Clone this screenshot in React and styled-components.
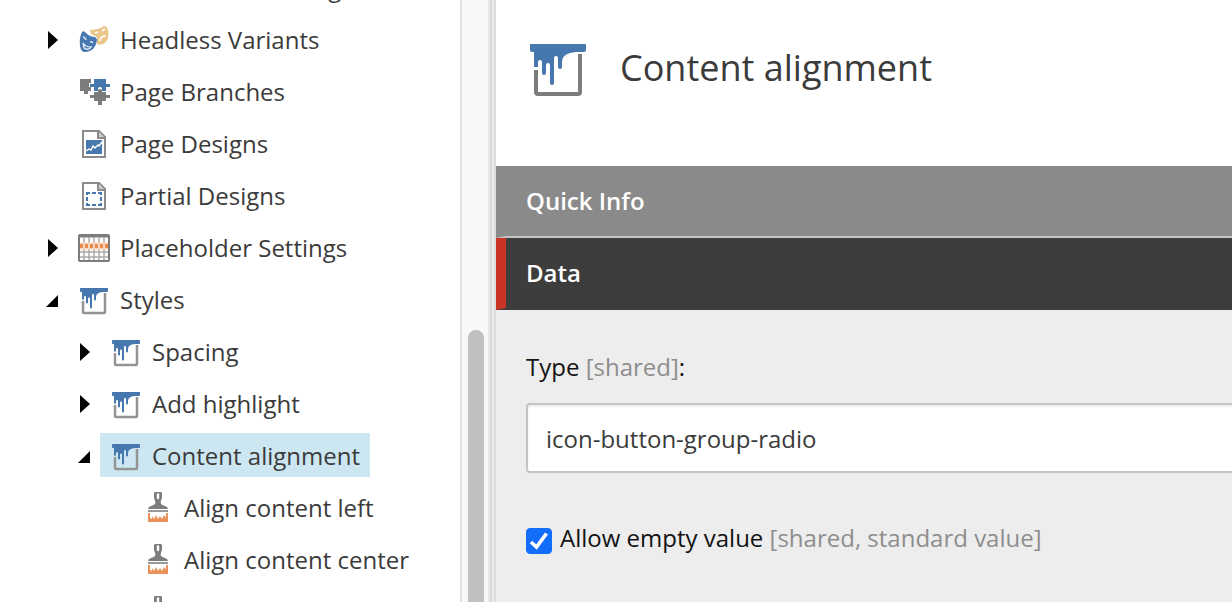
import React, { useState } from "react";
import styled, { createGlobalStyle } from "styled-components";

const GlobalStyle = createGlobalStyle`
  *, *::before, *::after { box-sizing: border-box; }
  body {
    margin: 0;
    background: #fff;
    color: #3b3b3b;
    font-family: "Open Sans", "Noto Sans", sans-serif;
    font-size: 24px;
    line-height: 44px;
  }
  button, input { font: inherit; color: inherit; }
`;

const Layout = styled.div`
  display: grid;
  grid-template-columns: 460px 28px 8px minmax(0, 1fr);
  height: 100vh;
  overflow: hidden;
`;

const TreePane = styled.nav`
  min-width: 0;
  overflow: hidden;
  background: #fff;
`;

const TreeList = styled.ul`
  list-style: none;
  margin: -38px 0 0;
  padding: 0;
`;

const TreeRow = styled.li`
  display: flex;
  align-items: center;
  height: 52px;
  padding-left: ${({ $level }) => 40 + $level * 32}px;
`;

const Toggle = styled.button`
  display: grid;
  place-items: center;
  flex: none;
  width: 28px;
  height: 32px;
  padding: 0;
  border: 0;
  background: none;
`;

const ToggleSpace = styled.span`
  flex: none;
  width: 28px;
`;

const TreeLink = styled.a`
  display: flex;
  align-items: center;
  gap: 10px;
  height: 44px;
  padding: 2px 10px 0;
  margin-bottom: 2px;
  background: ${({ $selected }) => ($selected ? "#cde7f2" : "transparent")};
  color: inherit;
  text-decoration: none;
  white-space: nowrap;
`;

const Icon = styled.svg`
  display: block;
  flex: none;
  width: ${({ $size }) => $size || 32}px;
  height: ${({ $size }) => $size || 32}px;
`;

const ScrollTrack = styled.div`
  display: flex;
  flex-direction: column;
  padding: 330px 4px 0 6px;
  border-left: 2px solid #e2e2e2;
  background: #f8f8f8;
`;

const ScrollThumb = styled.div`
  flex: 1;
  border-radius: 8px 8px 0 0;
  background: #c0c0c0;
`;

const Splitter = styled.div`
  border-left: 2px solid #e7e7e7;
  border-right: 2px solid #dedede;
  background: linear-gradient(to right, #dbdbdb 50%, #ebebeb 50%);
`;

const Editor = styled.main`
  display: flex;
  flex-direction: column;
  min-width: 0;
  overflow: hidden;
  background: #ededed;
`;

const EditorHeader = styled.header`
  display: flex;
  align-items: flex-start;
  gap: 30px;
  height: 166px;
  flex: none;
  padding: 36px 30px;
  background: #fff;
`;

const Title = styled.h1`
  margin: 0;
  font-size: 36px;
  font-weight: 400;
  line-height: 64px;
`;

const SectionHeading = styled.h2`
  margin: 0;
  flex: none;
  font-size: 24px;
`;

const SectionButton = styled.button`
  display: block;
  width: 100%;
  height: 72px;
  padding: 0 20px;
  border: solid;
  border-width: 0 0 2px 10px;
  border-color: ${({ $active }) => ($active ? "#413b41 #413b41 #413b41 #ca3427" : "#c4c4c4 #c4c4c4 #c4c4c4 #8a8a8a")};
  background: ${({ $active }) => ($active ? "#3d3d3d" : "#8a8a8a")};
  color: #fff;
  font-weight: 600;
  line-height: 70px;
  text-align: left;
`;

const Form = styled.form`
  padding: 35px 0 0 30px;
  color: #131313;
`;

const Field = styled.div`
  display: grid;
  gap: 14px;
  margin-bottom: 43px;
`;

const Hint = styled.span`
  color: #8e8e8e;
`;

const TextBox = styled.input`
  width: calc(100% + 8px);
  height: 70px;
  padding: 0 18px;
  border: 2px solid #c4c4c4;
  border-radius: 4px;
  background: #fff;
  box-shadow: inset 0 2px 2px rgba(0, 0, 0, 0.07);
  color: #3b3b3b;
  outline: 0;
`;

const CheckField = styled.label`
  display: flex;
  align-items: center;
  gap: 8px;
  white-space: pre;
`;

const CheckWrap = styled.span`
  display: grid;
  margin-top: 5px;
  & > * { grid-area: 1 / 1; }
`;

const CheckBox = styled.input`
  appearance: none;
  width: 26px;
  height: 26px;
  margin: 0;
  border: 1px solid #767676;
  border-radius: 4px;
  background: #fff;
  &:checked { background: #126dfb; border-color: #126dfb; }
  & + svg { visibility: hidden; pointer-events: none; }
  &:checked + svg { visibility: visible; }
`;

const BLUE = "#4677ae";
const GRAY = "#7c7c7c";

function PaintIcon({ size }) {
  return (
    <Icon $size={size} viewBox="0 0 64 64" aria-hidden="true">
      <path
        d="M10 34V56Q10 58 12 58H52Q54 58 54 56V18"
        fill="none"
        stroke={size ? GRAY : "#949494"}
        strokeWidth={size ? 4 : 5}
      />
      <path
        d="M5 8H59Q60 8 60 9V14Q60 16 58 16H50Q36 17 36 26V31Q36 33 34 33Q32 33 32 31V22Q32 20 30 20Q28 20 28 22V47Q28 49 26 49Q24 49 24 47V29Q24 27 22 27Q20 27 20 29V37Q20 39 18 39Q16 39 16 37V26Q16 24 14 24Q12 24 12 26V31H8V16H6Q4 16 4 14V9Q4 8 5 8Z"
        fill={BLUE}
      />
    </Icon>
  );
}

function ListIcon() {
  return (
    <Icon viewBox="0 0 32 32" aria-hidden="true">
      <path d="M4 6H28M4 14H28M4 22H28" stroke={GRAY} strokeWidth="3" />
    </Icon>
  );
}

function MasksIcon() {
  return (
    <Icon viewBox="0 0 32 32" aria-hidden="true">
      <path d="M12 6Q20 6 26 2Q29 2 30 6C31 11 30 16 28 18Q24 22 19 20L19 13L13 10Z" fill="#ebc689" />
      <path d="M17 9L20 8M24 7L27 5M22 17Q22 12 28 12" fill="none" stroke="#fff" strokeWidth="1.6" />
      <path d="M4 8Q6 6 8 9Q12 13 17 13Q19 14 19 16C18 23 14 28 7 28Q3 28 2 22Q1 14 4 8Z" fill={BLUE} />
      <path d="M5 13Q7 13 8 16M12 18Q14 17 15 19M5 19Q7 23 13 23Q10 27 6 24Z" fill="none" stroke="#dfe8f2" strokeWidth="1.4" />
    </Icon>
  );
}

function BranchesIcon() {
  return (
    <Icon viewBox="0 0 32 32" aria-hidden="true">
      <path d="M2 3H13V7H11V11H13V15H10V18H6V15H2Z" fill={GRAY} />
      <path d="M16 3H28V8H32V11H28V15H24V12Q22 10 20 12V15H16V11H12V8H16Z" fill={BLUE} />
      <path d="M20 14Q22 12 24 14V16H28V19H32V22H28V25H24V29H20V25H16V22H12V19H16V16H20Z" fill={GRAY} />
    </Icon>
  );
}

function PageOutline() {
  return (
    <>
      <path d="M5 3H21L27 9V29H5Z" fill="#fff" stroke="#8b8b8b" strokeWidth="2" />
      <path d="M20 3V10H27" fill="#ccc" stroke="#8b8b8b" strokeWidth="2" />
    </>
  );
}

function PageDesignIcon() {
  return (
    <Icon viewBox="0 0 32 32" aria-hidden="true">
      <PageOutline />
      <path d="M8 12H24V26H8Z" fill={BLUE} />
      <path d="M8 23L11 21L13 22L15 18L17 20L20 17L21 18L24 14" fill="none" stroke="#fff" strokeWidth="1.4" />
    </Icon>
  );
}

function PartialDesignIcon() {
  return (
    <Icon viewBox="0 0 32 32" aria-hidden="true">
      <PageOutline />
      <path
        d="M9 15V13H12M14 13H18M20 13H23V15M23 17V21M23 23V25H20M18 25H14M12 25H9V23M9 21V17"
        fill="none"
        stroke={BLUE}
        strokeWidth="2"
      />
    </Icon>
  );
}

function GridIcon() {
  return (
    <Icon viewBox="0 0 32 32" aria-hidden="true">
      <rect x="1" y="3" width="30" height="26" rx="1" fill="#fff" stroke={GRAY} strokeWidth="2" />
      <path d="M1 4H31" stroke={GRAY} strokeWidth="3" />
      <path d="M6 5V28M11 5V28M16 5V28M21 5V28M26 5V28M2 20H30M2 25H30" stroke="#aaa" strokeWidth="1.5" />
      <path d="M2 14H30" stroke="#f8d5bd" strokeWidth="7" />
      <path d="M2 14H5M7 14H10M12 14H15M17 14H20M22 14H25M27 14H30" stroke="#e78b4e" strokeWidth="4" />
    </Icon>
  );
}

function BrushIcon() {
  return (
    <Icon viewBox="0 0 32 32" aria-hidden="true">
      <path d="M12 1Q12 0 14 0H18Q20 0 20 1V6Q18 10 19 12Q20 13 23 14Q26 15 26 17H6Q6 15 9 14Q12 13 13 12Q14 10 12 6Z" fill={GRAY} />
      <path d="M16 2.5V6" stroke="#fff" strokeWidth="2.4" strokeLinecap="round" />
      <path d="M6 18H26V20H6Z" fill="#999" />
      <path d="M7 21V29H25V21" fill="#fff" stroke="#e9935a" strokeWidth="2" />
      <path d="M7 30V25L10 27V24L12 27L14 23L16 27L18 24L20 27L22 23L25 27V30Z" fill="#e9935a" />
    </Icon>
  );
}

function Arrow({ open }) {
  return (
    <svg width="16" height="20" viewBox="0 0 16 20" aria-hidden="true">
      <path d={open ? "M0 17L12 5V17Z" : "M2 1L12 10L2 19Z"} fill="#000" />
    </svg>
  );
}

const items = [
  { label: "Available Renderings", level: 0, icon: ListIcon },
  { label: "Headless Variants", level: 0, icon: MasksIcon, toggle: "closed" },
  { label: "Page Branches", level: 0, icon: BranchesIcon },
  { label: "Page Designs", level: 0, icon: PageDesignIcon },
  { label: "Partial Designs", level: 0, icon: PartialDesignIcon },
  { label: "Placeholder Settings", level: 0, icon: GridIcon, toggle: "closed" },
  { label: "Styles", level: 0, icon: PaintIcon, toggle: "open" },
  { label: "Spacing", level: 1, icon: PaintIcon, toggle: "closed" },
  { label: "Add highlight", level: 1, icon: PaintIcon, toggle: "closed" },
  { label: "Content alignment", level: 1, icon: PaintIcon, toggle: "open", selected: true },
  { label: "Align content left", level: 2, icon: BrushIcon },
  { label: "Align content center", level: 2, icon: BrushIcon },
  { label: "Align content right", level: 2, icon: BrushIcon },
];

function TreeItem({ item }) {
  const ItemIcon = item.icon;
  return (
    <TreeRow $level={item.level}>
      {item.toggle ? (
        <Toggle type="button" aria-label={`Toggle ${item.label}`} aria-expanded={item.toggle === "open"}>
          <Arrow open={item.toggle === "open"} />
        </Toggle>
      ) : (
        <ToggleSpace />
      )}
      <TreeLink href="#" $selected={item.selected} aria-current={item.selected ? "page" : undefined}>
        <ItemIcon />
        {item.label}
      </TreeLink>
    </TreeRow>
  );
}

export default function App() {
  const [type, setType] = useState("icon-button-group-radio");
  const [allowEmpty, setAllowEmpty] = useState(true);
  return (
    <>
      <GlobalStyle />
      <Layout>
        <TreePane aria-label="Content tree">
          <TreeList>
            {items.map((item) => (
              <TreeItem key={item.label} item={item} />
            ))}
          </TreeList>
        </TreePane>
        <ScrollTrack>
          <ScrollThumb />
        </ScrollTrack>
        <Splitter />
        <Editor>
          <EditorHeader>
            <PaintIcon size={64} />
            <Title>Content alignment</Title>
          </EditorHeader>
          <SectionHeading>
            <SectionButton type="button">Quick Info</SectionButton>
          </SectionHeading>
          <SectionHeading>
            <SectionButton type="button" $active>Data</SectionButton>
          </SectionHeading>
          <Form>
            <Field>
              <label htmlFor="type">
                Type <Hint>[shared]</Hint>:
              </label>
              <TextBox id="type" type="text" value={type} onChange={(e) => setType(e.target.value)} />
            </Field>
            <CheckField>
              <CheckWrap>
                <CheckBox type="checkbox" checked={allowEmpty} onChange={(e) => setAllowEmpty(e.target.checked)} />
                <svg width="26" height="26" viewBox="0 0 26 26" aria-hidden="true">
                  <path d="M5 14L10.5 19L20.5 5.5" fill="none" stroke="#fff" strokeWidth="3.6" />
                </svg>
              </CheckWrap>
              <span>Allow empty value <Hint>[shared, standard value]</Hint></span>
            </CheckField>
          </Form>
        </Editor>
      </Layout>
    </>
  );
}
